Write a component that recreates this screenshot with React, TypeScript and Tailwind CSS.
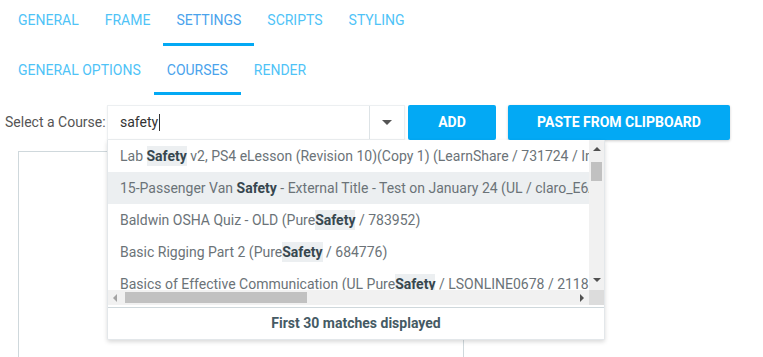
import React from 'react';

const tabs = ['GENERAL', 'FRAME', 'SETTINGS', 'SCRIPTS', 'STYLING'];
const subTabs = ['GENERAL OPTIONS', 'COURSES', 'RENDER'];

type Part = { t: string; b?: boolean };

const items: Part[][] = [
    [{ t: 'Lab ' }, { t: 'Safety', b: true }, { t: ' v2, PS4 eLesson (Revision 10)(Copy 1) (LearnShare / 731724 / Inactive)' }],
    [{ t: '15-Passenger Van ' }, { t: 'Safety', b: true }, { t: ' - External Title - Test on January 24 (UL / claro_E6A1)' }],
    [{ t: 'Baldwin OSHA Quiz - OLD (Pure' }, { t: 'Safety', b: true }, { t: ' / 783952)' }],
    [{ t: 'Basic Rigging Part 2 (Pure' }, { t: 'Safety', b: true }, { t: ' / 684776)' }],
    [{ t: 'Basics of Effective Communication (UL Pure' }, { t: 'Safety', b: true }, { t: ' / LSONLINE0678 / 211853)' }],
];

const App: React.FC = () => {
    return (
        <div className="relative w-[763px] h-[357px] overflow-hidden bg-white font-['Roboto',sans-serif]">
            {/* Main tabs */}
            <div className="flex pl-[5px] h-[46px]">
                {tabs.map((t, i) => (
                    <div
                        key={t}
                        className={`px-[13px] pt-[12px] h-[46px] text-[14px] leading-4 ${i === 2 ? 'text-[#4aa3ec] border-b-[3px] border-[#03a9f4]' : 'text-[#4fc3f7]'}`}
                    >
                        {t}
                    </div>
                ))}
            </div>

            {/* Sub tabs */}
            <div className="flex pl-[5px] h-[49px]">
                {subTabs.map((t, i) => (
                    <div
                        key={t}
                        className={`px-[13px] pt-[16px] h-[49px] text-[14px] leading-4 ${i === 1 ? 'text-[#4aa3ec] border-b-[3px] border-[#03a9f4]' : 'text-[#4fc3f7]'}`}
                    >
                        {t}
                    </div>
                ))}
            </div>

            {/* Course picker row */}
            <div className="flex items-center mt-[10px] h-[35px]">
                <div className="w-[107px] pl-[5px] whitespace-nowrap text-[14px] text-[#555]">Select a Course:</div>
                <div className="flex w-[298px] h-[35px] bg-white border border-[#eceff1] shadow-[0_1px_2px_rgba(0,0,0,0.06)]">
                    <div className="flex items-center flex-1 pl-[12px] text-[14px] text-[#333]">
                        safety<span className="w-px h-[17px] bg-[#333] ml-px" />
                    </div>
                    <div className="flex items-center justify-center w-[35px] border-l border-[#dde3e6]">
                        <div className="w-0 h-0 border-l-[5px] border-r-[5px] border-t-[5px] border-l-transparent border-r-transparent border-t-[#555]" />
                    </div>
                </div>
                <button className="ml-[3px] w-[88px] h-[35px] rounded-[2px] bg-[#03a9f4] text-white text-[14px] font-bold">ADD</button>
                <button className="ml-[12px] w-[222px] h-[35px] rounded-[2px] bg-[#03a9f4] text-white text-[14px] font-bold shadow-[0_1px_3px_rgba(0,0,0,0.2)]">
                    PASTE FROM CLIPBOARD
                </button>
            </div>

            {/* Panel behind */}
            <div className="ml-[18px] mt-[11px] w-[446px] h-[220px] border border-[#cfd8dc] border-b-0" />

            {/* Autocomplete dropdown */}
            <div className="absolute left-[107px] top-[140px] w-[498px] h-[200px] bg-white border border-[#e3e7ea] border-t-0 rounded-b-[2px] shadow-[0_2px_4px_rgba(0,0,0,0.15)] flex flex-col">
                <div className="flex h-[150px]">
                    <div className="flex-1 overflow-hidden">
                        {items.map((parts, i) => (
                            <div
                                key={i}
                                className={`h-[32px] leading-[32px] pl-[12px] whitespace-nowrap overflow-hidden text-[14px] text-[#6b7378] ${i === 1 ? 'bg-[#eceff1]' : ''}`}
                            >
                                {parts.map((p, j) =>
                                    p.b ? (
                                        <span key={j} className={`font-bold text-[#37474f] py-[2px] ${i === 1 ? '' : 'bg-[#eceff1]'}`}>{p.t}</span>
                                    ) : (
                                        <span key={j}>{p.t}</span>
                                    )
                                )}
                            </div>
                        ))}
                    </div>
                    {/* vertical scrollbar */}
                    <div className="relative w-[15px] bg-[#f1f1f1]">
                        <div className="absolute left-[4px] top-[7px] w-0 h-0 border-l-[4px] border-r-[4px] border-b-[4px] border-l-transparent border-r-transparent border-b-[#505050]" />
                        <div className="absolute left-[2px] top-[22px] w-[11px] h-[19px] bg-[#c1c1c1]" />
                        <div className="absolute left-[4px] bottom-[8px] w-0 h-0 border-l-[4px] border-r-[4px] border-t-[4px] border-l-transparent border-r-transparent border-t-[#505050]" />
                    </div>
                </div>
                {/* horizontal scrollbar */}
                <div className="flex h-[15px]">
                    <div className="relative flex-1 bg-[#f1f1f1]">
                        <div className="absolute left-[5px] top-[4px] w-0 h-0 border-t-[4px] border-b-[4px] border-r-[4px] border-t-transparent border-b-transparent border-r-[#a3a3a3]" />
                        <div className="absolute left-[17px] top-[2px] w-[182px] h-[11px] bg-[#c1c1c1]" />
                        <div className="absolute right-[5px] top-[4px] w-0 h-0 border-t-[4px] border-b-[4px] border-l-[4px] border-t-transparent border-b-transparent border-l-[#505050]" />
                    </div>
                    <div className="w-[15px] bg-[#dcdcdc]" />
                </div>
                <div className="mt-[2px] border-t border-[#cfd8dc] flex-1 flex items-center justify-center text-[14px] font-bold text-[#455a64]">
                    First 30 matches displayed
                </div>
            </div>
        </div>
    );
};

export default App;
